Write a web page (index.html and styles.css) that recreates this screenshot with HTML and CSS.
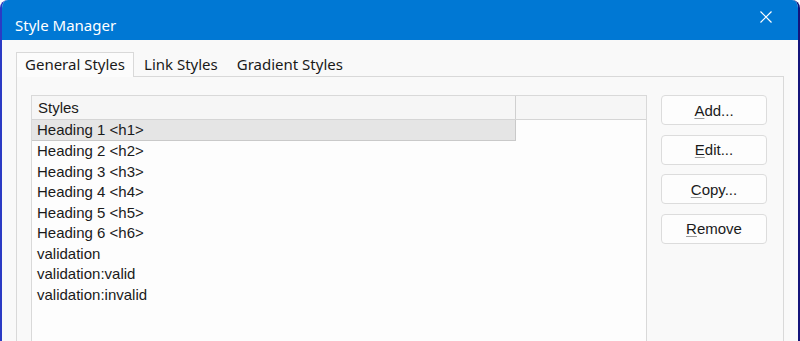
FILE: index.html
```html
<!DOCTYPE html>
<html>
<head>
  <title>Style Manager</title>
  <meta name="viewport" content="width=device-width, initial-scale=1">
  <link rel="stylesheet" href="styles.css">
</head>
<body>
  <div class="window">
    <div class="titlebar">
      <span class="title">Style Manager</span>
      <span class="close">
        <svg width="12" height="12" viewBox="0 0 12 12">
          <path d="M0.5 0.5 L11.5 11.5 M11.5 0.5 L0.5 11.5" stroke="#ffffff" stroke-width="1.2" fill="none"/>
        </svg>
      </span>
    </div>

    <div class="content">
      <!-- Tab strip -->
      <div class="tabs">
        <div class="tab selected">General Styles</div>
        <div class="tab">Link Styles</div>
        <div class="tab">Gradient Styles</div>
      </div>

      <div class="panel">
        <div class="list">
          <div class="list-header">
            <div class="col">Styles</div>
          </div>
          <div class="row selected">Heading 1 &lt;h1&gt;</div>
          <div class="row">Heading 2 &lt;h2&gt;</div>
          <div class="row">Heading 3 &lt;h3&gt;</div>
          <div class="row">Heading 4 &lt;h4&gt;</div>
          <div class="row">Heading 5 &lt;h5&gt;</div>
          <div class="row">Heading 6 &lt;h6&gt;</div>
          <div class="row">validation</div>
          <div class="row">validation:valid</div>
          <div class="row">validation:invalid</div>
        </div>

        <div class="buttons">
          <button><u>A</u>dd...</button>
          <button><u>E</u>dit...</button>
          <button><u>C</u>opy...</button>
          <button><u>R</u>emove</button>
        </div>
      </div>
    </div>
  </div>
</body>
</html>
```

FILE: styles.css
```css
/* Common styles */
body {
  margin: 0;
  padding: 0;
  background-color: #ffffff;
  font-family: "Noto Sans", "Open Sans", sans-serif;
  overflow: hidden;
}

/* Window frame */
.window {
  width: 800px;
  height: 341px;
  box-sizing: border-box;
  border-left: 2px solid #2b3bc4;
  border-right: 2px solid #14147a;
  border-top-right-radius: 8px;
  border-top-left-radius: 8px;
  background-color: #f9f9f9;
  overflow: hidden;
}

.titlebar {
  height: 40px;
  box-sizing: border-box;
  background-color: #0078d4;
  color: #ffffff;
  display: flex;
  align-items: flex-start;
  justify-content: space-between;
  padding: 0 26px 0 13px;
}

.title {
  font-size: 15px;
  line-height: 20px;
  margin-top: 15px;
}

.close {
  display: flex;
  margin-top: 11px;
}

/* Tabs */
.content {
  padding: 12px 14px 0 14px;
}

.tabs {
  display: flex;
  height: 24px;
  font-size: 15px;
  color: #1a1a1a;
}

.tab {
  padding: 0 8px 0 9px;
  line-height: 22px;
  border: 1px solid transparent;
  border-bottom: none;
}

.tab.selected {
  padding: 0 8px;
  background-color: #fcfcfc;
  border-color: #d9d9d9;
  position: relative;
  z-index: 1;
  height: 24px;
  margin-bottom: -1px;
}

.panel {
  border: 1px solid #d9d9d9;
  height: 300px;
  display: flex;
  gap: 14px;
  padding: 18px 16px 0 14px;
}

/* List */
.list {
  width: 614px;
  border: 1px solid #d9d9d9;
  background-color: #fdfdfd;
  font-family: "Liberation Sans", Arial, sans-serif;
  font-size: 15px;
  color: #1a1a1a;
}

.list-header {
  height: 23px;
  background-color: #f6f6f6;
  border-bottom: 1px solid #d5d5d5;
}

.list-header .col {
  width: 477px;
  height: 23px;
  line-height: 23px;
  padding-left: 6px;
  border-right: 1px solid #d0d0d0;
}

.row {
  height: 20.5px;
  line-height: 20px;
  padding-left: 5px;
  box-sizing: border-box;
}

.row.selected {
  width: 484px;
  height: 21px;
  background-color: #e5e5e5;
  border-right: 1px solid #c9c9c9;
  border-bottom: 1px solid #c9c9c9;
}

/* Buttons */
.buttons {
  display: flex;
  flex-direction: column;
  gap: 9.5px;
}

button {
  width: 106px;
  height: 30px;
  background-color: #fdfdfd;
  border: 1px solid #dcdcdc;
  border-radius: 4px;
  font-family: "Liberation Sans", Arial, sans-serif;
  font-size: 15px;
  color: #1a1a1a;
  padding: 0;
}

button u {
  text-decoration-color: #9a9a9a;
  text-underline-offset: 2px;
}
```
